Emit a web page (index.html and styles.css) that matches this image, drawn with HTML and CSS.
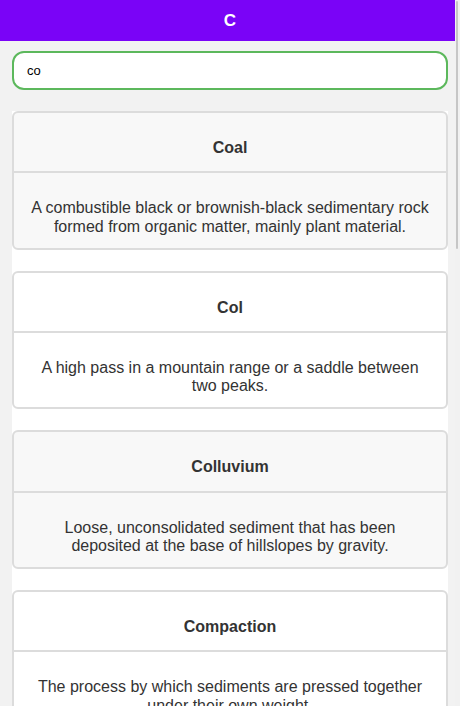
FILE: index.html
```html
<!DOCTYPE html>
<html lang="en">
<head>
<meta charset="utf-8">
<title>C</title>
<link rel="stylesheet" href="styles.css">
</head>
<body>
<header class="topbar"><h1 class="topbar-title">C</h1></header>
<div class="search-wrap">
  <input class="search" type="text" value="co">
</div>
<main class="list">
  <article class="card card-alt">
    <h2 class="card-title">Coal</h2>
    <p class="card-desc">A combustible black or brownish-black sedimentary rock formed from organic matter, mainly plant material.</p>
  </article>
  <article class="card">
    <h2 class="card-title">Col</h2>
    <p class="card-desc">A high pass in a mountain range or a saddle between two peaks.</p>
  </article>
  <article class="card card-alt">
    <h2 class="card-title">Colluvium</h2>
    <p class="card-desc">Loose, unconsolidated sediment that has been deposited at the base of hillslopes by gravity.</p>
  </article>
  <article class="card">
    <h2 class="card-title">Compaction</h2>
    <p class="card-desc">The process by which sediments are pressed together under their own weight.</p>
  </article>
  <article class="card card-alt">
    <h2 class="card-title">Conglomerate</h2>
    <p class="card-desc">A sedimentary rock made of rounded gravel-sized clasts cemented together.</p>
  </article>
  <article class="card">
    <h2 class="card-title">Contact Metamorphism</h2>
    <p class="card-desc">Changes in rock caused by heat from a nearby intrusion of magma.</p>
  </article>
  <article class="card card-alt">
    <h2 class="card-title">Continental Crust</h2>
    <p class="card-desc">The thick, less dense layer of rock that forms the continents.</p>
  </article>
  <article class="card">
    <h2 class="card-title">Continental Drift</h2>
    <p class="card-desc">The gradual movement of the continents across the Earth's surface.</p>
  </article>
  <article class="card card-alt">
    <h2 class="card-title">Convergent Boundary</h2>
    <p class="card-desc">A plate boundary where two tectonic plates move toward each other.</p>
  </article>
  <article class="card">
    <h2 class="card-title">Core</h2>
    <p class="card-desc">The innermost layer of the Earth, composed mainly of iron and nickel.</p>
  </article>
  <article class="card card-alt">
    <h2 class="card-title">Corrie</h2>
    <p class="card-desc">A bowl-shaped hollow on a mountainside carved by glacial erosion.</p>
  </article>
  <article class="card">
    <h2 class="card-title">Country Rock</h2>
    <p class="card-desc">The rock that surrounds an igneous intrusion or mineral deposit.</p>
  </article>
</main>
<div class="scrollbar" aria-hidden="true"><div class="scrollbar-thumb"></div></div>
</body>
</html>
```
FILE: styles.css
```css
html {
  scrollbar-width: none;
}
html::-webkit-scrollbar {
  width: 0;
  height: 0;
}
body {
  margin: 0;
  background: #f2f2f2;
  font-family: "Liberation Sans", Arial, sans-serif;
  color: #333;
}
.topbar {
  height: 41px;
  background: #7a03f7;
  display: flex;
  align-items: center;
  justify-content: center;
}
.topbar-title {
  margin: 0;
  color: #fff;
  font-size: 17px;
  font-weight: bold;
  line-height: 1;
}
.search-wrap {
  padding: 10px 12px 21px;
}
.search {
  box-sizing: border-box;
  display: block;
  width: 100%;
  height: 39px;
  margin: 0;
  padding: 0 13px;
  border: 2px solid #5cb85c;
  border-radius: 12px;
  background: #fff;
  font-family: "Liberation Sans", Arial, sans-serif;
  font-size: 13px;
  color: #000;
  outline: none;
}
.list {
  margin: 0 12px;
  background: #fff;
  display: flex;
  flex-direction: column;
  gap: 21px;
}
.card {
  border: 2px solid #dcdcdc;
  border-radius: 6px;
  background: #fff;
  text-align: center;
}
.card-alt {
  background: #f8f8f8;
}
.card-title {
  margin: 0;
  padding: 26px 15px 14px;
  font-size: 16px;
  line-height: 18.4px;
  font-weight: bold;
  color: #333;
  border-bottom: 2px solid #dcdcdc;
}
.card-desc {
  margin: 0;
  padding: 26px 15px 11.4px;
  font-size: 16px;
  line-height: 18.4px;
  color: #333;
}
.scrollbar {
  position: fixed;
  top: 0;
  right: 0;
  width: 5px;
  height: 100%;
  background: #f1f1f1;
}
.scrollbar-thumb {
  margin: 1px 2px 0 1px;
  height: 248px;
  border-radius: 2px;
  background: #c6c6c6;
}
```
